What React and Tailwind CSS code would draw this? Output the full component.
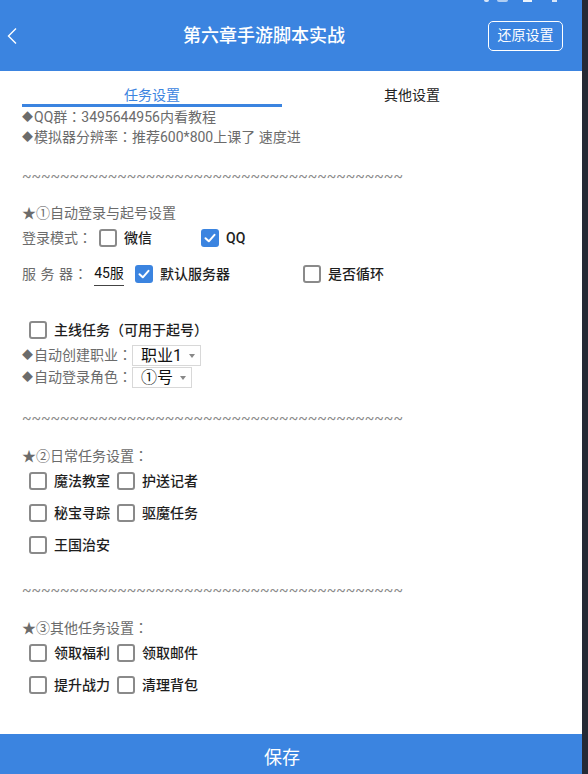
import { useState } from 'react'

const TILDES = '~'.repeat(40)

function Colon() {
  return <span className="font-['Noto_Sans_CJK_JP',sans-serif] leading-none">：</span>
}

function Dot() {
  return <span className="text-[11px] leading-none align-[1px] mr-[1px]">◆</span>
}

function Box({ checked }) {
  if (checked) {
    return (
      <span className="w-[18px] h-[18px] rounded-[3px] bg-[#3b84e0] flex items-center justify-center shrink-0">
        <svg width="14" height="14" viewBox="0 0 14 14">
          <polyline points="2.5,7.2 5.8,10.3 11.5,3.8" fill="none" stroke="white" strokeWidth="2" strokeLinecap="round" strokeLinejoin="round" />
        </svg>
      </span>
    )
  }
  return <span className="w-[18px] h-[18px] rounded-[3px] border-2 border-[#8a8a8a] bg-white shrink-0" />
}

function Check({ label, checked, className = '' }) {
  return (
    <div className={`flex items-center h-6 ${className}`}>
      <Box checked={checked} />
      <span className="ml-[7px] text-[14px] text-[#1e1e1e] font-medium whitespace-nowrap">{label}</span>
    </div>
  )
}

function Select({ value, width }) {
  return (
    <div className={`flex items-center h-[21px] border border-[#d8d8d8] pl-[8px] shrink-0 ${width}`}>
      <span className="text-[16px] text-[#111] leading-none">{value}</span>
      <span className="ml-auto mr-[5px] w-0 h-0 border-l-[3px] border-r-[3px] border-t-[4px] border-l-transparent border-r-transparent border-t-[#888]" />
    </div>
  )
}

function Tilde({ className = '' }) {
  return (
    <div className={`h-5 leading-5 text-[14px] text-[#8a8a8a] whitespace-nowrap ${className}`}>{TILDES}</div>
  )
}

function TaskGrid({ rows }) {
  return (
    <div className="pl-[7px] mt-[3px] flex flex-col gap-2">
      {rows.map((row, i) => (
        <div key={i} className="flex">
          {row.map((t) => (
            <Check key={t} label={t} className="w-[88px]" />
          ))}
        </div>
      ))}
    </div>
  )
}

export default function App() {
  const [tab] = useState(0)

  return (
    <div className="w-[588px] h-[774px] flex bg-[#252a35] font-[Roboto,'Noto_Sans_CJK_SC',sans-serif] overflow-hidden">
      <div className="w-[582px] h-full flex flex-col bg-white">
        {/* Header */}
        <div className="relative h-[71px] bg-[#3b84e0] flex items-center shrink-0">
          <div className="absolute top-0 left-[484px] w-[5px] h-[2px] bg-white/80 rounded-b-sm" />
          <div className="absolute top-0 left-[497px] w-[11px] h-[2px] bg-white/60 rounded-b-sm" />
          <div className="absolute top-0 left-[523px] w-[9px] h-[2px] bg-white/90" />
          <div className="absolute top-0 left-[552px] w-[5px] h-[2px] bg-white/80" />
          <div className="w-[40px] h-full flex items-center pl-[6px]">
            <svg width="12" height="18" viewBox="0 0 12 18">
              <polyline points="10,1.5 2.5,9 10,16.5" fill="none" stroke="white" strokeWidth="1.4" />
            </svg>
          </div>
          <div className="flex-1 text-center text-white text-[18px] font-medium">第六章手游脚本实战</div>
          <div className="mr-[19px] w-[75px] h-[30px] border border-white rounded-[5px] flex items-center justify-center text-white text-[14px]">
            还原设置
          </div>
        </div>

        {/* Body */}
        <div className="flex-1 pl-[22px] min-h-0">
          <div className="flex w-[520px]">
            <div className="flex-1 flex flex-col items-center">
              <span className={`pt-[15px] h-[33px] leading-[18px] text-[14px] ${tab === 0 ? 'text-[#3b84e0]' : 'text-[#222]'}`}>任务设置</span>
              <span className="w-full h-[3px] bg-[#3b84e0]" />
            </div>
            <div className="flex-1 flex flex-col items-center">
              <span className="pt-[15px] h-[33px] leading-[18px] text-[14px] text-[#222]">其他设置</span>
            </div>
          </div>

          <div className="text-[14px] text-[#6b6b6b] whitespace-nowrap">
            <div className="h-5 leading-5"><Dot />QQ群<Colon />3495644956内看教程</div>
            <div className="h-5 leading-5"><Dot />模拟器分辨率<Colon />推荐600*800上课了 速度进</div>
          </div>

          <Tilde className="mt-[19px]" />

          <div className="mt-[17px] h-5 leading-5 text-[14px] text-[#6b6b6b]">★①自动登录与起号设置</div>

          <div className="mt-[3px] flex items-center h-6">
            <span className="w-[77px] shrink-0 text-[14px] text-[#6b6b6b] whitespace-nowrap">登录模式<Colon /></span>
            <Check label="微信" className="w-[102px]" />
            <Check label="QQ" checked />
          </div>

          <div className="mt-[12px] flex items-center h-6">
            <span className="w-[72px] shrink-0 text-[14px] text-[#6b6b6b] whitespace-pre tracking-[0.5px]">服 务 器<Colon /></span>
            <span className="w-[30px] shrink-0 h-6 leading-[23px] border-b border-[#444] text-[14px] text-[#111] text-center">45服</span>
            <Check label="默认服务器" checked className="ml-[11px] w-[168px]" />
            <Check label="是否循环" />
          </div>

          <Check label="主线任务（可用于起号）" className="mt-[32px] ml-[7px]" />

          <div className="mt-[3px] flex items-center h-[21px]">
            <span className="w-[110px] shrink-0 text-[14px] text-[#6b6b6b] whitespace-nowrap"><Dot />自动创建职业<Colon /></span>
            <Select value="职业1" width="w-[69px]" />
          </div>
          <div className="mt-[1px] flex items-center h-[21px]">
            <span className="w-[110px] shrink-0 text-[14px] text-[#6b6b6b] whitespace-nowrap"><Dot />自动登录角色<Colon /></span>
            <Select value="①号" width="w-[60px]" />
          </div>

          <Tilde className="mt-[20px]" />

          <div className="mt-[18px] h-5 leading-5 text-[14px] text-[#6b6b6b]">★②日常任务设置<Colon /></div>
          <TaskGrid rows={[['魔法教室', '护送记者'], ['秘宝寻踪', '驱魔任务'], ['王国治安']]} />

          <Tilde className="mt-[23px]" />

          <div className="mt-[18px] h-5 leading-5 text-[14px] text-[#6b6b6b]">★③其他任务设置<Colon /></div>
          <TaskGrid rows={[['领取福利', '领取邮件'], ['提升战力', '清理背包']]} />
        </div>

        {/* Footer */}
        <div className="h-10 shrink-0 bg-[#3b84e0] flex items-center justify-center pt-[7px] pr-[18px] text-white text-[18px]">
          保存
        </div>
      </div>
    </div>
  )
}
